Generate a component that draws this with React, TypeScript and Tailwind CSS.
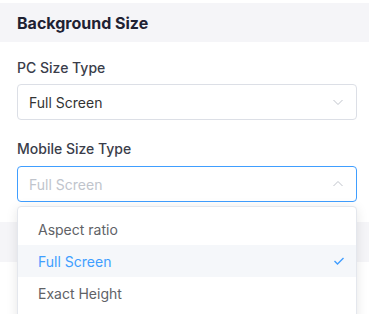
import React from "react";

const Chevron = ({ up = false }: { up?: boolean }) => (
  <svg width="12" height="12" viewBox="0 0 12 12" fill="none" className={up ? "rotate-180" : ""}>
    <path d="M1.5 4 L6 8.5 L10.5 4" stroke="#c0c4cc" strokeWidth="1" />
  </svg>
);

export default function App() {
  return (
    <div className="relative w-[369px] h-[314px] overflow-hidden bg-white pt-[3px]" style={{ fontFamily: "Inter, 'Noto Sans', sans-serif" }}>
      <div className="h-[39px] bg-[#f5f5f8] px-[17px] flex items-center">
        <span className="text-[16px] font-bold text-[#1f2233]">Background Size</span>
      </div>
      <div className="pl-[17px] pr-[12px]">
        <div className="mt-[15px] h-[20px] flex items-center text-[14px] font-medium text-[#3a3d4a]">PC Size Type</div>
        <div className="mt-[7px] h-[36px] rounded-[4px] border border-[#dcdfe6] flex items-center justify-between pl-[11px] pr-[12px]">
          <span className="text-[14px] text-[#333]">Full Screen</span>
          <Chevron />
        </div>
        <div className="mt-[18px] h-[20px] flex items-center text-[14px] font-medium text-[#3a3d4a]">Mobile Size Type</div>
        <div className="mt-[8px] h-[36px] rounded-[4px] border border-[#409eff] flex items-center justify-between pl-[11px] pr-[12px]">
          <span className="text-[14px] text-[#c0c4cc]">Full Screen</span>
          <Chevron up />
        </div>
      </div>
      <div className="mt-[20px] h-[40px] bg-[#f5f5f8]" />
      <div className="absolute left-[17px] top-[206px] w-[340px] h-[120px] bg-white border border-[#e4e7ed] rounded-[4px] shadow-[0_2px_12px_0_rgba(0,0,0,0.1)] pt-[6px]">
        <div className="h-[32px] flex items-center px-[20px] text-[14px] text-[#606266]">Aspect ratio</div>
        <div className="h-[32px] flex items-center justify-between pl-[20px] pr-[11px] text-[14px] text-[#409eff] bg-[#f5f7fa]">
          <span>Full Screen</span>
          <svg width="12" height="12" viewBox="0 0 12 12" fill="none">
            <path d="M1.5 6 L4.5 9 L10.5 3" stroke="#409eff" strokeWidth="1.4" />
          </svg>
        </div>
        <div className="h-[32px] flex items-center px-[20px] text-[14px] text-[#606266]">Exact Height</div>
      </div>
    </div>
  );
}
